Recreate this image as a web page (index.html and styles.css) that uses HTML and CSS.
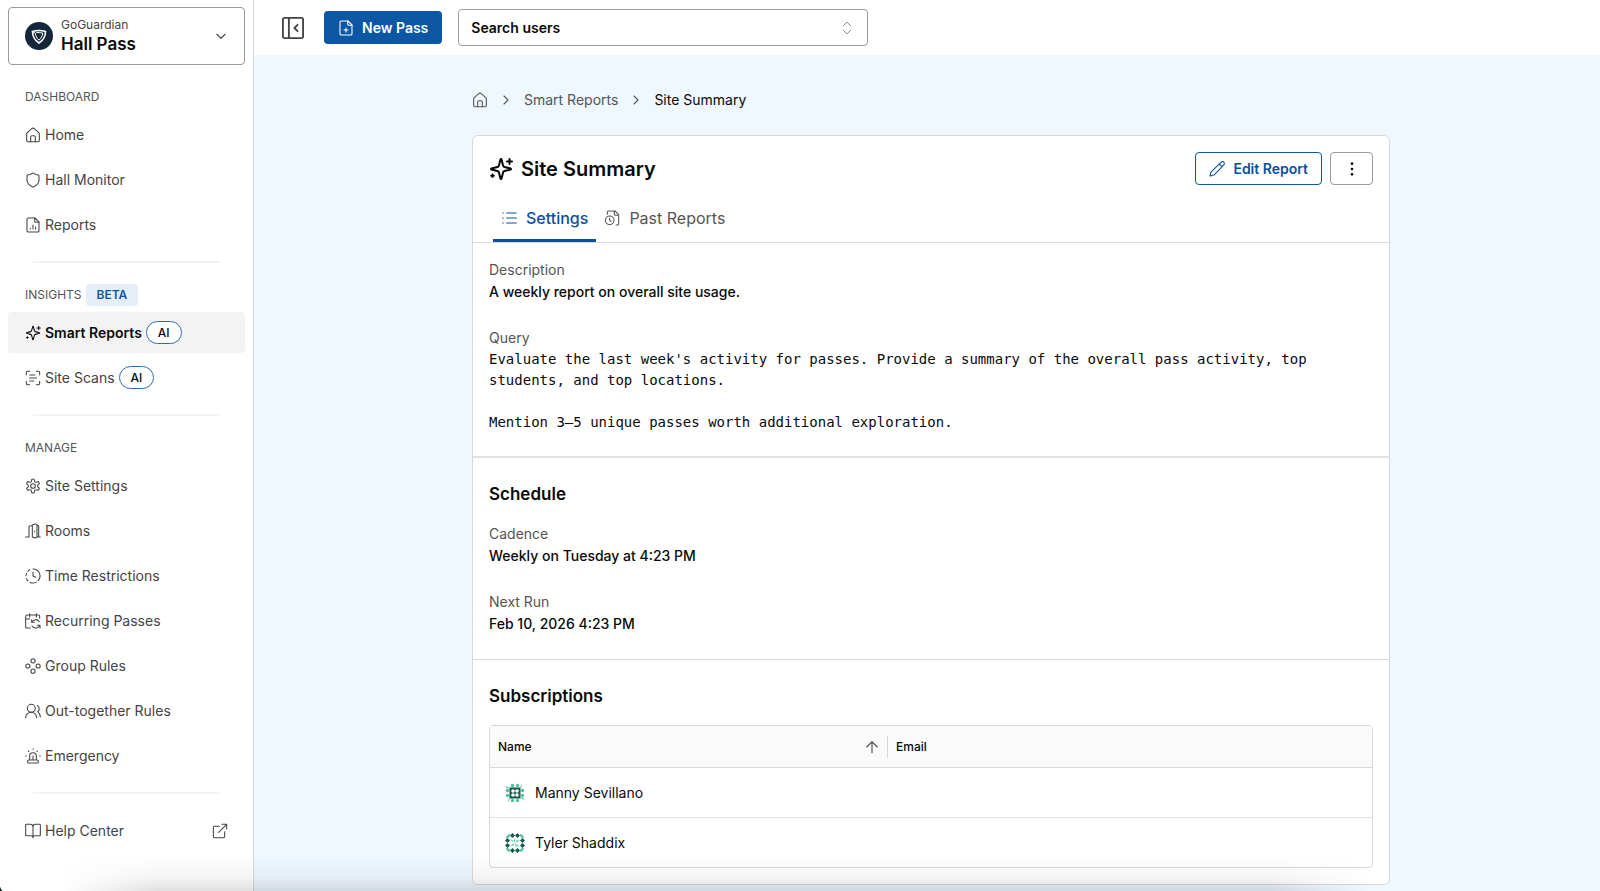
FILE: index.html
```html
<!DOCTYPE html>
<html lang="en">

<head>
    <meta charset="UTF-8">
    <meta name="viewport" content="width=device-width, initial-scale=1">
    <title>Site Summary - Hall Pass</title>
    <link rel="stylesheet" href="styles.css">
</head>

<body>
    <!-- icon sprite -->
    <svg class="sprite" aria-hidden="true">
        <symbol id="i-home" viewBox="0 0 24 24"><path d="M2.500 10.500a3 3 0 0 1 1-2.200l6.500-5.800a3 3 0 0 1 4 0l6.500 5.800a3 3 0 0 1 1 2.200V20a2 2 0 0 1-2 2h-15a2 2 0 0 1-2-2z"/><path d="M8.500 22v-7a2 2 0 0 1 2-2h3a2 2 0 0 1 2 2v7"/></symbol>
        <symbol id="i-shield" viewBox="0 0 24 24"><path d="M21 12.500c0 5.200-4 8-8.660 9.950a1 1 0 0 1-.67-.01C7 20.500 3 17.700 3 12.500V5.500a1 1 0 0 1 1-1c2.500 0 5.300-1 7.240-2.720a1.170 1.170 0 0 1 1.520 0C14.700 3.500 17.500 4.500 20 4.500a1 1 0 0 1 1 1z"/></symbol>
        <symbol id="i-report" viewBox="0 0 24 24"><path d="M15 1.500H5a2 2 0 0 0-2 2v17a2 2 0 0 0 2 2h14a2 2 0 0 0 2-2v-13z"/><path d="M14.500 1.500V6a2 2 0 0 0 2 2H21M8 18v-1M12 18v-6M16 18v-3"/></symbol>
        <symbol id="i-sparkles" viewBox="0 0 24 24"><path d="M9.937 15.500A2 2 0 0 0 8.500 14.063l-6.135-1.582a.5.5 0 0 1 0-.962L8.500 9.936A2 2 0 0 0 9.937 8.500l1.582-6.135a.5.5 0 0 1 .963 0L14.063 8.500A2 2 0 0 0 15.500 9.937l6.135 1.581a.5.5 0 0 1 0 .964L15.500 14.063a2 2 0 0 0-1.437 1.437l-1.582 6.135a.5.5 0 0 1-.963 0z"/><path d="M20.500 2v5M23 4.500h-5M3.500 17.500v2.500M4.800 18.800H2.200"/></symbol>
        <symbol id="i-scan" viewBox="0 0 24 24"><path d="M2 7V4a2 2 0 0 1 2-2h3M17 2h3a2 2 0 0 1 2 2v3M22 17v3a2 2 0 0 1-2 2h-3M7 22H4a2 2 0 0 1-2-2v-3M7 7.500h8M7 12h10M7 16.500h6"/></symbol>
        <symbol id="i-gear" viewBox="0 0 24 24"><path d="M12.220 1.500h-.44a2 2 0 0 0-2 2v.68a2 2 0 0 1-1 1.730l-.43.25a2 2 0 0 1-2 0l-.55-.28a2 2 0 0 0-2.730.73l-.22.38a2 2 0 0 0 .73 2.730l.55.300a2 2 0 0 1 1 1.720v.51a2 2 0 0 1-1 1.740l-.55.290a2 2 0 0 0-.73 2.730l.22.38a2 2 0 0 0 2.730.73l.55-.28a2 2 0 0 1 2 0l.43.25a2 2 0 0 1 1 1.730v.68a2 2 0 0 0 2 2h.44a2 2 0 0 0 2-2v-.68a2 2 0 0 1 1-1.730l.43-.25a2 2 0 0 1 2 0l.55.28a2 2 0 0 0 2.730-.73l.22-.39a2 2 0 0 0-.73-2.730l-.55-.28a2 2 0 0 1-1-1.740v-.5a2 2 0 0 1 1-1.740l.55-.29a2 2 0 0 0 .73-2.730l-.22-.38a2 2 0 0 0-2.730-.73l-.55.28a2 2 0 0 1-2 0l-.43-.25a2 2 0 0 1-1-1.730V3.500a2 2 0 0 0-2-2z"/><circle cx="12" cy="12" r="3.500"/></symbol>
        <symbol id="i-door" viewBox="0 0 24 24"><path d="M1 21h5M18 21h5M6 21V6a2 2 0 0 1 2-2h3M20.500 21V5a2 2 0 0 0-2-2M11 4.200V21M11 4.200a2 2 0 0 1 1.600-2l3-.6a2 2 0 0 1 2.400 2V21M11 21l4 1.500 3-1.500M14.500 12v1"/></symbol>
        <symbol id="i-clock" viewBox="0 0 24 24"><path d="M12 1.500a10.500 10.500 0 0 1 7.800 17.500M17 21.200a10.500 10.500 0 0 1-9.500.4M4.200 19.200a10.500 10.500 0 0 1-1.900-3M1.500 11.500a10.500 10.500 0 0 1 .8-3.400M4.200 4.900a10.500 10.500 0 0 1 2.800-2.200M12 6v6l4 2"/></symbol>
        <symbol id="i-calendar" viewBox="0 0 24 24"><path d="M7 1v5M17 1v5M22 8V5a2 2 0 0 0-2-2H3a2 2 0 0 0-2 2v15.500a2 2 0 0 0 2 2h5M1 9h6M10 10v4h4M10 14a6.500 6.500 0 0 1 11.500-1M22.500 22.500v-4h-4M22 18.500a6.500 6.500 0 0 1-11.500 1"/></symbol>
        <symbol id="i-group" viewBox="0 0 24 24"><circle cx="12" cy="4.300" r="3.100"/><circle cx="4.300" cy="12" r="3.100"/><circle cx="19.700" cy="12" r="3.100"/><circle cx="12" cy="19.700" r="3.100"/></symbol>
        <symbol id="i-users" viewBox="0 0 24 24"><path d="M17.500 22a8 8 0 0 0-16.500 0"/><circle cx="9.500" cy="8" r="6"/><path d="M23 21c0-3.370-2-6.500-4-8a5.500 5.500 0 0 0-.45-9.300"/></symbol>
        <symbol id="i-siren" viewBox="0 0 24 24"><path d="M7 18v-6a5 5 0 0 1 10 0v6M5 22.500h14a1 1 0 0 0 1-1V20a2 2 0 0 0-2-2H6a2 2 0 0 0-2 2v1.500a1 1 0 0 0 1 1zM22 12h1M18.700 4.500l-.7.700M1 12h1M12 1v1M5 4.500l.8.800M12 12v6"/></symbol>
        <symbol id="i-book" viewBox="0 0 24 24"><path d="M12 6v16M2 19a1 1 0 0 1-1-1V3a1 1 0 0 1 1-1h6a4 4 0 0 1 4 4 4 4 0 0 1 4-4h6a1 1 0 0 1 1 1v15a1 1 0 0 1-1 1h-7a3 3 0 0 0-3 3 3 3 0 0 0-3-3z"/></symbol>
        <symbol id="i-external" viewBox="0 0 24 24"><path d="M15 2h7v7M10 14 22 2M19 13v7a2 2 0 0 1-2 2H4a2 2 0 0 1-2-2V7a2 2 0 0 1 2-2h7"/></symbol>
        <symbol id="i-down" viewBox="0 0 24 24"><path d="m5 9 7 7 7-7"/></symbol>
        <symbol id="i-right" viewBox="0 0 24 24"><path d="m9 18 6-6-6-6"/></symbol>
        <symbol id="i-updown" viewBox="0 0 24 24"><path d="m6 16 6 6 6-6M6 8l6-6 6 6"/></symbol>
        <symbol id="i-panel" viewBox="0 0 24 24"><rect x="1" y="1" width="22" height="22" rx="2"/><path d="M7.500 1v22M17 8.500 13.500 12l3.500 3.500"/></symbol>
        <symbol id="i-file-plus" viewBox="0 0 24 24"><path d="M15 1.500H5a2 2 0 0 0-2 2v17a2 2 0 0 0 2 2h14a2 2 0 0 0 2-2v-13z"/><path d="M14.500 1.500V6a2 2 0 0 0 2 2H21M9 15h6M12 12v6"/></symbol>
        <symbol id="i-pencil" viewBox="0 0 24 24"><path d="M22.170 5.810a1 1 0 0 0-3.980-3.990L3.340 16.170a2 2 0 0 0-.5.830l-1.320 4.850a.5.5 0 0 0 .62.620l4.850-1.320a2 2 0 0 0 .83-.5zM15.500 4.500l4 4"/></symbol>
        <symbol id="i-dots" viewBox="0 0 24 24"><g fill="currentColor" stroke="none"><circle cx="12" cy="4" r="2"/><circle cx="12" cy="12" r="2"/><circle cx="12" cy="20" r="2"/></g></symbol>
        <symbol id="i-list" viewBox="0 0 24 24"><path d="M8.500 4.500H23M8.500 12H23M8.500 19.500H23M2.500 4.500h1M2.500 12h1M2.500 19.500h1"/></symbol>
        <symbol id="i-file-clock" viewBox="0 0 24 24"><path d="M18 22.500h2a2 2 0 0 0 2-2V7l-5.500-5.500H7a2 2 0 0 0-2 2v3M15.500 1.500V6a2 2 0 0 0 2 2H22"/><circle cx="8.500" cy="15.500" r="6.500"/><path d="M8.500 12v3.500l2 1.500"/></symbol>
        <symbol id="i-up" viewBox="0 0 24 24"><path d="m3 12 9-9 9 9M12 22V3"/></symbol>
    </svg>

    <div class="app">
        <aside class="sidebar">
            <button class="product" type="button">
                <svg class="logo" viewBox="0 0 28 28" aria-hidden="true">
                    <circle cx="14" cy="14" r="14" fill="#14263a"/>
                    <path d="M7.500 9.500c4-1.300 9-1.300 13 0 0 4.700-2.300 8.800-6.500 11.500-4.200-2.700-6.500-6.800-6.500-11.500z" fill="none" stroke="#fff" stroke-width="1.600"/>
                    <path d="M6.800 9.300l3.400 1.700c.5 3 1.600 5.200 3.800 7.200 2.200-2 3.300-4.200 3.800-7.200l-6.500-.6" fill="none" stroke="#fff" stroke-width="1"/>
                </svg>
                <span class="product-text">
                    <span class="company">GoGuardian</span>
                    <span class="product-name">Hall Pass</span>
                </span>
                <svg class="icon"><use href="#i-down"/></svg>
            </button>

            <nav class="nav">
                <h2 class="nav-label">DASHBOARD</h2>
                <ul>
                    <li><a href="#"><svg class="icon"><use href="#i-home"/></svg>Home</a></li>
                    <li><a href="#"><svg class="icon"><use href="#i-shield"/></svg>Hall Monitor</a></li>
                    <li><a href="#"><svg class="icon"><use href="#i-report"/></svg>Reports</a></li>
                </ul>
                <hr>
                <h2 class="nav-label">INSIGHTS <span class="beta">BETA</span></h2>
                <ul>
                    <li><a href="#" class="active"><svg class="icon"><use href="#i-sparkles"/></svg>Smart Reports<span class="ai">AI</span></a></li>
                    <li><a href="#"><svg class="icon"><use href="#i-scan"/></svg>Site Scans<span class="ai">AI</span></a></li>
                </ul>
                <hr>
                <h2 class="nav-label">MANAGE</h2>
                <ul>
                    <li><a href="#"><svg class="icon"><use href="#i-gear"/></svg>Site Settings</a></li>
                    <li><a href="#"><svg class="icon"><use href="#i-door"/></svg>Rooms</a></li>
                    <li><a href="#"><svg class="icon"><use href="#i-clock"/></svg>Time Restrictions</a></li>
                    <li><a href="#"><svg class="icon"><use href="#i-calendar"/></svg>Recurring Passes</a></li>
                    <li><a href="#"><svg class="icon"><use href="#i-group"/></svg>Group Rules</a></li>
                    <li><a href="#"><svg class="icon"><use href="#i-users"/></svg>Out-together Rules</a></li>
                    <li><a href="#"><svg class="icon"><use href="#i-siren"/></svg>Emergency</a></li>
                </ul>
                <hr>
                <ul>
                    <li><a href="#"><svg class="icon"><use href="#i-book"/></svg>Help Center<svg class="icon external"><use href="#i-external"/></svg></a></li>
                </ul>
            </nav>
        </aside>

        <div class="content">
            <header class="topbar">
                <button class="collapse" type="button" aria-label="Collapse sidebar"><svg class="icon"><use href="#i-panel"/></svg></button>
                <button class="btn btn-primary" type="button"><svg class="icon"><use href="#i-file-plus"/></svg>New Pass</button>
                <div class="search">
                    <input type="text" placeholder="Search users" aria-label="Search users">
                    <svg class="icon"><use href="#i-updown"/></svg>
                </div>
            </header>

            <main class="page">
                <nav class="breadcrumb" aria-label="Breadcrumb">
                    <a href="#" aria-label="Home"><svg class="icon"><use href="#i-home"/></svg></a>
                    <svg class="icon"><use href="#i-right"/></svg>
                    <a href="#">Smart Reports</a>
                    <svg class="icon"><use href="#i-right"/></svg>
                    <span class="current">Site Summary</span>
                </nav>

                <article class="card">
                    <div class="card-head">
                        <svg class="icon title-icon"><use href="#i-sparkles"/></svg>
                        <h1>Site Summary</h1>
                        <div class="actions">
                            <button class="btn btn-outline" type="button"><svg class="icon"><use href="#i-pencil"/></svg>Edit Report</button>
                            <button class="btn btn-more" type="button" aria-label="More actions"><svg class="icon"><use href="#i-dots"/></svg></button>
                        </div>
                    </div>

                    <div class="tabs" role="tablist">
                        <button class="tab selected" type="button" role="tab" aria-selected="true"><svg class="icon"><use href="#i-list"/></svg>Settings</button>
                        <button class="tab" type="button" role="tab" aria-selected="false"><svg class="icon"><use href="#i-file-clock"/></svg>Past Reports</button>
                    </div>

                    <section class="details">
                        <dl>
                            <div>
                                <dt>Description</dt>
                                <dd>A weekly report on overall site usage.</dd>
                            </div>
                            <div>
                                <dt>Query</dt>
                                <dd class="query">Evaluate the last week's activity for passes. Provide a summary of the overall pass activity, top students, and top locations.

Mention 3–5 unique passes worth additional exploration.</dd>
                            </div>
                        </dl>
                    </section>

                    <section>
                        <h2>Schedule</h2>
                        <dl>
                            <div>
                                <dt>Cadence</dt>
                                <dd>Weekly on Tuesday at 4:23 PM</dd>
                            </div>
                            <div>
                                <dt>Next Run</dt>
                                <dd>Feb 10, 2026 4:23 PM</dd>
                            </div>
                        </dl>
                    </section>

                    <section class="subscriptions">
                        <h2>Subscriptions</h2>
                        <table>
                            <thead>
                                <tr>
                                    <th class="col-name" aria-sort="ascending"><div class="sort">Name<svg class="icon"><use href="#i-up"/></svg></div></th>
                                    <th>Email</th>
                                </tr>
                            </thead>
                            <tbody>
                                <tr>
                                    <td>
                                        <div class="user">
                                            <svg class="avatar" viewBox="0 0 20 20" aria-hidden="true">
                                                <g fill="#4fc3a1">
                                                    <circle cx="7.500" cy="2.500" r="1.700"/><circle cx="12.500" cy="2.500" r="1.700"/>
                                                    <circle cx="7.500" cy="17.500" r="1.700"/><circle cx="12.500" cy="17.500" r="1.700"/>
                                                    <circle cx="2.500" cy="7.500" r="1.700"/><circle cx="2.500" cy="12.500" r="1.700"/>
                                                    <circle cx="17.500" cy="7.500" r="1.700"/><circle cx="17.500" cy="12.500" r="1.700"/>
                                                    <path d="M0 3l5 2-3 .5zM17 0l-.5 4-1.500 1zM20 17l-5-2 3-.5zM3 20l.5-4L5 15z"/>
                                                </g>
                                                <path fill="#17594a" d="M4.500 4.500h11v11h-11z"/>
                                                <g fill="#fff">
                                                    <circle cx="8" cy="8" r="1.800"/><circle cx="12" cy="8" r="1.800"/>
                                                    <circle cx="8" cy="12" r="1.800"/><circle cx="12" cy="12" r="1.800"/>
                                                </g>
                                            </svg>
                                            Manny Sevillano
                                        </div>
                                    </td>
                                    <td></td>
                                </tr>
                                <tr>
                                    <td>
                                        <div class="user">
                                            <svg class="avatar" viewBox="0 0 20 20" aria-hidden="true">
                                                <g fill="#4fc3a1">
                                                    <path d="M5 1v2L3 5H1q.5-3.500 4-4zM15 1v2l2 2h2q-.5-3.500-4-4zM5 19v-2l-2-2H1q.5 3.500 4 4zM15 19v-2l2-2h2q-.5 3.500-4 4z"/>
                                                    <path d="M10 5v4.500L8.500 8zM15 7l-4.500 3 1-2.500zM11 15l-1-4.500 1.800 1.500zM5 13l4.500-3-1 2.500zM5.500 6l3 2-1.500.5zM14.500 14l-3-2 1.500-.5z"/>
                                                </g>
                                                <path fill="#17594a" d="M7.500 0 10 2.500 7.500 5 5 2.500zM12.500 0 15 2.500 12.500 5 10 2.500zM7.500 15l2.500 2.500L7.500 20 5 17.500zM12.500 15l2.500 2.500-2.500 2.500-2.500-2.500zM2.500 5 5 7.500 2.500 10 0 7.500zM2.500 10 5 12.500 2.500 15 0 12.500zM17.500 5 20 7.500 17.500 10 15 7.500zM17.500 10l2.500 2.500-2.500 2.500-2.500-2.500z"/>
                                            </svg>
                                            Tyler Shaddix
                                        </div>
                                    </td>
                                    <td></td>
                                </tr>
                            </tbody>
                        </table>
                    </section>
                </article>
            </main>
        </div>
    </div>
    <div class="bottom-shade"></div>
    <div class="corner"></div>
</body>

</html>
```
FILE: styles.css
```css
* {
    box-sizing: border-box;
}

body {
    margin: 0;
    font-family: Inter, "Liberation Sans", sans-serif;
    font-size: 14px;
    line-height: 22px;
    color: #0a0a0a;
    background-color: #fff;
}

h1,
h2,
ul,
dl,
dd {
    margin: 0;
    padding: 0;
}

ul {
    list-style: none;
}

a {
    color: inherit;
    text-decoration: none;
}

button,
input {
    font: inherit;
    color: inherit;
    cursor: pointer;
}

.sprite {
    display: none;
}

.icon {
    width: 16px;
    height: 16px;
    flex: none;
    fill: none;
    stroke: currentColor;
    stroke-width: 1.6;
    stroke-linecap: round;
    stroke-linejoin: round;
}

.app {
    display: flex;
    min-height: 100vh;
}

/* sidebar */
.sidebar {
    width: 254px;
    flex: none;
    padding: 7px 8px;
    border-right: 1px solid #d9d9d9;
}

.product {
    display: flex;
    align-items: center;
    gap: 8px;
    width: 100%;
    height: 58px;
    padding: 0 16px;
    text-align: left;
    background-color: #fff;
    border: 1px solid #9b9b9b;
    border-radius: 4px;
}

.product .icon {
    margin-left: auto;
    width: 14px;
    height: 14px;
    color: #444;
    stroke-width: 2;
}

.logo {
    width: 28px;
    height: 28px;
}

.product-text {
    display: flex;
    flex-direction: column;
    padding-bottom: 2px;
}

.company {
    font-size: 12px;
    line-height: 18px;
    color: #444;
}

.product-name {
    font-size: 17px;
    line-height: 20px;
    font-weight: 600;
}

.nav {
    padding-top: 16px;
}

.nav-label {
    display: flex;
    align-items: center;
    gap: 4px;
    height: 33px;
    padding-left: 17px;
    padding-bottom: 1px;
    font-size: 12px;
    font-weight: 400;
    color: #555;
}

.beta {
    padding: 0 11px;
    border-radius: 4px;
    background-color: #e5edf7;
    color: #0b57a4;
    font-weight: 600;
}

.nav ul {
    display: flex;
    flex-direction: column;
    gap: 4px;
}

.nav li a {
    display: flex;
    align-items: center;
    gap: 4px;
    height: 41px;
    padding: 0 17px;
    border-radius: 4px;
    color: #444;
}

.nav li a.active {
    background-color: #f3f3f3;
    color: #0a0a0a;
    font-weight: 600;
}

.ai {
    padding: 0 11px;
    border: 1px solid #2b6cb5;
    border-radius: 12px;
    background-color: #fff;
    color: #0a0a0a;
    font-size: 12px;
    line-height: 21px;
    font-weight: 500;
}

.external {
    margin-left: auto;
}

.nav hr {
    height: 2px;
    margin: 16px 25px;
    border: 0;
    background-color: #f3f3f3;
}

/* top bar */
.content {
    flex: 1;
    min-width: 0;
    display: flex;
    flex-direction: column;
}

.topbar {
    display: flex;
    align-items: center;
    gap: 16px;
    height: 55px;
    padding: 0 28px;
}

.collapse {
    display: flex;
    padding: 0;
    margin-right: 4px;
    border: 0;
    background: none;
    color: #444;
}

.collapse .icon {
    width: 22px;
    height: 22px;
    stroke-width: 2;
}

.btn {
    display: flex;
    align-items: center;
    justify-content: center;
    gap: 8px;
    height: 33px;
    padding: 0 13px;
    border: 1px solid transparent;
    border-radius: 4px;
    background-color: #fff;
    font-weight: 600;
}

.btn-primary {
    background-color: #0b57a4;
    color: #fff;
}

.search {
    position: relative;
    width: 410px;
}

.search input {
    width: 100%;
    height: 37px;
    padding: 0 40px 0 12px;
    border: 1px solid #9b9b9b;
    border-radius: 4px;
    font-weight: 600;
}

.search input::placeholder {
    color: #0a0a0a;
    opacity: 1;
}

.search .icon {
    position: absolute;
    top: 12px;
    right: 14px;
    width: 14px;
    height: 14px;
    color: #777;
}

/* page */
.page {
    flex: 1;
    padding: 34px 16px 6px 24px;
    background-color: #eff7ff;
}

.breadcrumb,
.card {
    max-width: 918px;
    margin: 0 auto;
}

.breadcrumb {
    display: flex;
    align-items: center;
    gap: 10px;
    margin-bottom: 24px;
    color: #555;
}

.breadcrumb a {
    display: flex;
}

.breadcrumb .current {
    color: #0a0a0a;
}

.card {
    border: 1px solid #d9d9d9;
    border-radius: 6px;
    background-color: #fff;
}

.card-head {
    display: flex;
    align-items: center;
    gap: 8px;
    padding: 16px 16px 0;
}

.title-icon {
    width: 24px;
    height: 24px;
    stroke-width: 2;
}

.card h1 {
    font-size: 20px;
    line-height: 28px;
    font-weight: 600;
}

.actions {
    display: flex;
    gap: 8px;
    margin-left: auto;
}

.btn-outline {
    border-color: #0b57a4;
    color: #0b4fa0;
}

.btn-more {
    width: 43px;
    border-color: #9b9b9b;
}

.tabs {
    display: flex;
    padding: 8px 20px 0;
    border-bottom: 1px solid #d9d9d9;
}

.tab {
    display: flex;
    align-items: center;
    gap: 9px;
    height: 49px;
    padding: 3px 8px 0;
    border: 0;
    border-bottom: 3px solid transparent;
    background: none;
    font-size: 16px;
    color: #555;
}

.tab.selected {
    border-color: #0b4fa0;
    color: #0b4fa0;
    font-weight: 500;
}

.card section {
    padding: 24px 16px;
    border-bottom: 1px solid #d9d9d9;
}

.card .details {
    padding: 16px 16px 23px;
    border-bottom: 2px solid #e3e3e3;
}

.card .subscriptions {
    padding-bottom: 16px;
    border-bottom: 0;
}

.card h2 {
    margin-bottom: 16px;
    font-size: 17px;
    line-height: 25px;
    font-weight: 600;
}

.card dl {
    display: flex;
    flex-direction: column;
    gap: 24px;
}

.card dt {
    color: #555;
}

.card dd {
    font-weight: 500;
}

.card .query {
    font-family: "DejaVu Sans Mono", monospace;
    font-size: 14px;
    line-height: 21px;
    font-weight: 400;
    white-space: pre-wrap;
}

table {
    width: 100%;
    table-layout: fixed;
    border: 1px solid #d9d9d9;
    border-radius: 4px;
    border-spacing: 0;
}

th {
    height: 42px;
    padding: 0 8px;
    border-bottom: 1px solid #d9d9d9;
    background-color: #fafafa;
    font-size: 12px;
    font-weight: 500;
    text-align: left;
}

.col-name {
    width: 398px;
    padding-right: 0;
}

.sort {
    display: flex;
    align-items: center;
    justify-content: space-between;
    padding-right: 8px;
    border-right: 1px solid #d9d9d9;
}

.sort .icon {
    width: 14px;
    height: 14px;
    color: #555;
    stroke-width: 2;
}

td {
    height: 49px;
    padding: 0 15px;
}

tbody tr:first-child td {
    height: 50px;
    border-bottom: 1px solid #e3e3e3;
}

.user {
    display: flex;
    align-items: center;
    gap: 10px;
}

.avatar {
    width: 20px;
    height: 20px;
}

/* soft shade and rounded corner along the bottom edge of the window */
.bottom-shade {
    position: fixed;
    left: 60px;
    right: 230px;
    bottom: 0;
    height: 36px;
    background: linear-gradient(to top, rgba(0, 0, 0, 0.12), rgba(0, 0, 0, 0.04) 40%, transparent);
    -webkit-mask-image: linear-gradient(to right, transparent, #000 100px, #000 calc(100% - 100px), transparent);
    mask-image: linear-gradient(to right, transparent, #000 100px, #000 calc(100% - 100px), transparent);
    pointer-events: none;
}

.corner {
    position: fixed;
    left: 0;
    bottom: 0;
    width: 4px;
    height: 8px;
    background: radial-gradient(ellipse at top right, transparent 70%, #12261c 80%);
}
```
